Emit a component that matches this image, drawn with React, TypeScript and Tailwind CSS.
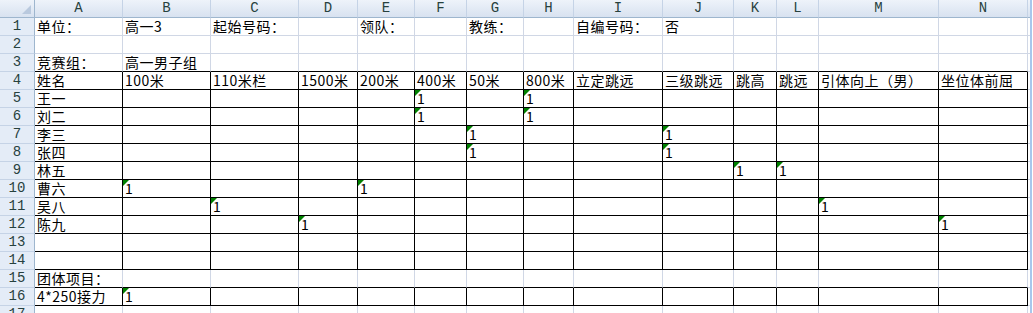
import React from "react";

const cols = [
  { k: "A", w: 88 },
  { k: "B", w: 88 },
  { k: "C", w: 88 },
  { k: "D", w: 59 },
  { k: "E", w: 57 },
  { k: "F", w: 52 },
  { k: "G", w: 57 },
  { k: "H", w: 50 },
  { k: "I", w: 89 },
  { k: "J", w: 71 },
  { k: "K", w: 43 },
  { k: "L", w: 42 },
  { k: "M", w: 120 },
  { k: "N", w: 89 },
];

const text: Record<number, Record<string, string>> = {
  1: { A: "单位：", B: "高一3", C: "起始号码：", E: "领队：", G: "教练：", I: "自编号码：", J: "否" },
  3: { A: "竞赛组：", B: "高一男子组" },
  4: {
    A: "姓名", B: "100米", C: "110米栏", D: "1500米", E: "200米", F: "400米", G: "50米",
    H: "800米", I: "立定跳远", J: "三级跳远", K: "跳高", L: "跳远", M: "引体向上（男）", N: "坐位体前屈",
  },
  5: { A: "王一" },
  6: { A: "刘二" },
  7: { A: "李三" },
  8: { A: "张四" },
  9: { A: "林五" },
  10: { A: "曹六" },
  11: { A: "吴八" },
  12: { A: "陈九" },
  15: { A: "团体项目：" },
  16: { A: "4*250接力" },
};

// cells holding a "1" stored as text (green corner marker)
const ones: Record<number, string[]> = {
  5: ["F", "H"],
  6: ["F", "H"],
  7: ["G", "J"],
  8: ["G", "J"],
  9: ["K", "L"],
  10: ["B", "E"],
  11: ["C", "M"],
  12: ["D", "N"],
  16: ["B"],
};

const rows = Array.from({ length: 17 }, (_, i) => i + 1);

const cellFont = { fontFamily: '"Noto Sans CJK SC", "Noto Sans", sans-serif' };
const headFont = { fontFamily: '"Liberation Mono", "DejaVu Sans Mono", monospace' };

function Cell({ r, c }: { r: number; c: string }) {
  const blackBottom = r >= 3 && r <= 16;
  const blackRight = (r >= 4 && r <= 14) || r === 16;
  const isOne = ones[r]?.includes(c);
  const value = isOne ? "1" : text[r]?.[c];

  return (
    <div
      className={`relative h-[18px] border-r border-b flex items-end whitespace-nowrap overflow-visible ${
        blackBottom ? "border-b-black" : "border-b-[#d0d7e5]"
      } ${blackRight ? "border-r-black" : "border-r-[#d0d7e5]"}`}
    >
      {isOne && (
        <svg className="absolute left-0 top-0" width="6" height="6" viewBox="0 0 6 6">
          <polygon points="0,0 6,0 0,6" fill="#008000" />
        </svg>
      )}
      {value && (
        <span
          className="pl-[2px] text-[14px] leading-[17px] tracking-[0.5px] text-black z-10"
          style={cellFont}
        >
          {value}
        </span>
      )}
    </div>
  );
}

export default function App() {
  return (
    <div className="w-[1033px] h-[313px] overflow-hidden bg-white flex">
      <div className="grid grid-cols-[35px_88px_88px_88px_59px_57px_52px_57px_50px_89px_71px_43px_42px_120px_89px_2px] auto-rows-[18px]">
        {/* corner */}
        <div className="relative h-[18px] border-r border-b border-r-[#9eb6ce] border-b-[#9eb6ce] bg-gradient-to-b from-[#eef3fa] to-[#d8e2f0]">
          <svg className="absolute right-[3px] bottom-[3px]" width="9" height="9" viewBox="0 0 9 9">
            <polygon points="9,0 9,9 0,9" fill="#b9c9de" />
          </svg>
        </div>
        {cols.map((c) => (
          <div
            key={c.k}
            className="h-[18px] border-r border-b border-r-[#c5d3e6] border-b-[#9eb6ce] bg-gradient-to-b from-[#eef3fa] to-[#d8e2f0] flex items-center justify-center text-[14px] text-[#27413e]"
            style={headFont}
          >
            {c.k}
          </div>
        ))}
        <div className="h-[18px] border-b border-b-[#9eb6ce] bg-gradient-to-b from-[#eef3fa] to-[#d8e2f0]" />

        {rows.map((r) => (
          <React.Fragment key={r}>
            <div
              className="h-[18px] border-r border-b border-r-[#9eb6ce] border-b-[#c5d3e6] bg-[#e4ecf7] flex items-center justify-center text-[14px] text-[#27413e]"
              style={headFont}
            >
              {r}
            </div>
            {cols.map((c) => (
              <Cell key={c.k} r={r} c={c.k} />
            ))}
            <div className="h-[18px] border-b border-b-[#d0d7e5]" />
          </React.Fragment>
        ))}
      </div>
      <div className="w-[2px] h-full bg-[#a9c7ec]" />
      <div className="w-[1px] h-full bg-white" />
    </div>
  );
}
